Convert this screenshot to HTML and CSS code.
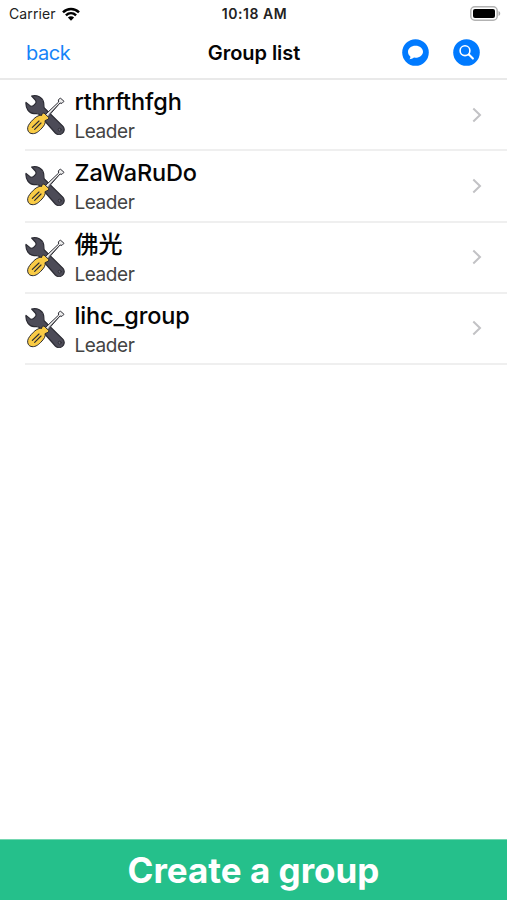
FILE: index.html
```html
<!DOCTYPE html>
<html lang="en">
<head>
<meta charset="utf-8">
<title>Group list</title>
<link rel="stylesheet" href="styles.css">
</head>
<body>
<svg class="defs" aria-hidden="true">
  <symbol id="tools" viewBox="0 0 120 120">
    <g stroke="#2b2b33" stroke-width="3.500" stroke-linejoin="round" stroke-linecap="round">
      <path fill="#4c4b57" d="M20 3C36-1 53 7 56 23c1 7 0 12 2 16l56 55c6 7 4 16-2 21s-15 5-21-1L41 57c-3-2-8-1-14-1C12 55 1 40 3 22l12 10c3 2 8 2 11-1l5-5c3-3 2-8 0-11z"/>
      <path fill="#eee" stroke-width="3" d="M62 58l39-37-1-6 6-6 11 10-6 6-6-1-36 41z"/>
      <path stroke-width="1.800" d="M72 58l26-27"/>
      <path fill="#f9cb45" stroke-width="3" d="M50 60l2-5 5-1 14 13 0 5-11 5c2 8-2 14-9 22-9 10-18 18-30 17-10-1-14-9-13-18 1-8 9-17 17-25 6-6 13-12 25-13z"/>
      <path fill="none" stroke-width="3.500" d="M42 78L22 97M48 84L29 103"/>
      <circle cx="104" cy="104" r="4.500" fill="#686773" stroke-width="2.500"/>
    </g>
  </symbol>
  <symbol id="chevron" viewBox="0 0 10 16">
    <path d="M1.300 1.500L8 8l-6.700 6.500" fill="none" stroke="#c2c2c5" stroke-width="2"/>
  </symbol>
</svg>
<div class="screen">
  <header class="status">
    <div class="carrier"><span>Carrier</span>
      <svg class="wifi" viewBox="0 0 18 14" fill="none" stroke="#000" stroke-width="2.500"><path d="M1 5.300C5.500.9 12.500.9 17 5.300M3.900 8.400c3-2.800 7.200-2.800 10.200 0"/><path fill="#000" stroke="none" d="M5.900 10.600c1.900-1.700 4.300-1.700 6.200 0L9 13.700z"/></svg>
    </div>
    <div class="time">10:18 AM</div>
    <svg class="battery" viewBox="0 0 32 16"><rect x="1.800" y=".8" width="26.400" height="13.400" rx="4" fill="#fff" stroke="#b2b2b2" stroke-width="1.500"/><rect x="4" y="3" width="22" height="9" rx="2" fill="#000"/><path d="M29.500 5c2.300.8 2.300 4.200 0 5z" fill="#aaa"/></svg>
  </header>
  <nav class="navbar">
    <a class="back">back</a>
    <h1 class="title">Group list</h1>
    <div class="actions">
      <svg viewBox="0 0 27 27"><circle cx="13.500" cy="13.500" r="13.300" fill="#007aff"/><path fill="#fff" d="M13.500 6.700c4.300 0 7.500 2.700 7.500 6s-3.200 6-7.500 6l-1.500-.1c-1.400 1-3 1.500-4.500 1.600.8-.9 1-1.700.8-2.700C6.900 16.300 6 14.700 6 12.700c0-3.300 3.200-6 7.500-6z"/></svg>
      <svg viewBox="0 0 27 27"><circle cx="13.500" cy="13.500" r="13.300" fill="#007aff"/><g fill="none" stroke="#fff" stroke-linecap="round"><circle cx="12" cy="11.700" r="4.900" stroke-width="1.600"/><path d="M15.900 15.600l4 4" stroke-width="2.100"/></g></svg>
    </div>
  </nav>
  <main class="list">
    <div class="row"><svg class="tool"><use href="#tools"/></svg><div class="info"><div class="name">rthrfthfgh</div><div class="role">Leader</div></div><svg class="chev"><use href="#chevron"/></svg></div>
    <div class="row"><svg class="tool"><use href="#tools"/></svg><div class="info"><div class="name">ZaWaRuDo</div><div class="role">Leader</div></div><svg class="chev"><use href="#chevron"/></svg></div>
    <div class="row"><svg class="tool"><use href="#tools"/></svg><div class="info"><div class="name cjk">佛光</div><div class="role">Leader</div></div><svg class="chev"><use href="#chevron"/></svg></div>
    <div class="row"><svg class="tool"><use href="#tools"/></svg><div class="info"><div class="name">lihc_group</div><div class="role">Leader</div></div><svg class="chev"><use href="#chevron"/></svg></div>
  </main>
  <button class="create">Create a group</button>
</div>
</body>
</html>
```
FILE: styles.css
```css
* { box-sizing: border-box; }
body { margin: 0; background: #fff; color: #050505; font-family: Inter, "Noto Sans CJK SC", sans-serif; }
.defs { position: absolute; width: 0; height: 0; }
.screen { display: flex; flex-direction: column; width: 507px; height: 900px; overflow: hidden; }
.status { display: grid; grid-template-columns: 1fr auto 1fr; align-items: center; height: 27px; padding: 0 6px 0 9px; }
.carrier { display: flex; align-items: center; gap: 6px; font-size: 14px; letter-spacing: .1px; color: #222; }
.wifi { width: 18px; height: 14px; }
.time { font-size: 14px; font-weight: 600; color: #222; letter-spacing: .55px; margin-right: 1px; }
.battery { width: 32px; height: 16px; justify-self: end; }
.navbar { display: grid; grid-template-columns: 1fr auto 1fr; align-items: center; height: 53px; padding: 1px 27px 0 28px; border-bottom: 2px solid #e9e9e9; }
.back { margin-left: -2px; font-size: 20px; letter-spacing: -.45px; color: #1684f8; }
.title { margin: 0; font-size: 20px; font-weight: 600; letter-spacing: -.05px; }
.actions { display: flex; justify-content: flex-end; gap: 24px; padding-bottom: 2px; }
.actions svg { width: 27px; height: 27px; }
.list { flex: 1; padding-left: 25px; }
.row { display: flex; align-items: center; height: 71.250px; padding-right: 25px; border-bottom: 2px solid #efefef; }
.tool { width: 40px; height: 40px; }
.info { flex: 1; padding: 2px 0 0 9.500px; }
.name { height: 31px; line-height: 31px; font-size: 23.500px; font-weight: 500; letter-spacing: -.12px; }
.cjk { font-size: 24px; }
.role { height: 28px; line-height: 30px; font-size: 19px; letter-spacing: -.45px; color: #444; }
.chev { width: 10px; height: 16px; }
.create { height: 61px; border: 0; border-top: 1px solid #74d7b1; background: #25c08b; color: #fff; font: 700 35px/60px Inter, sans-serif; padding: 0; }
```
